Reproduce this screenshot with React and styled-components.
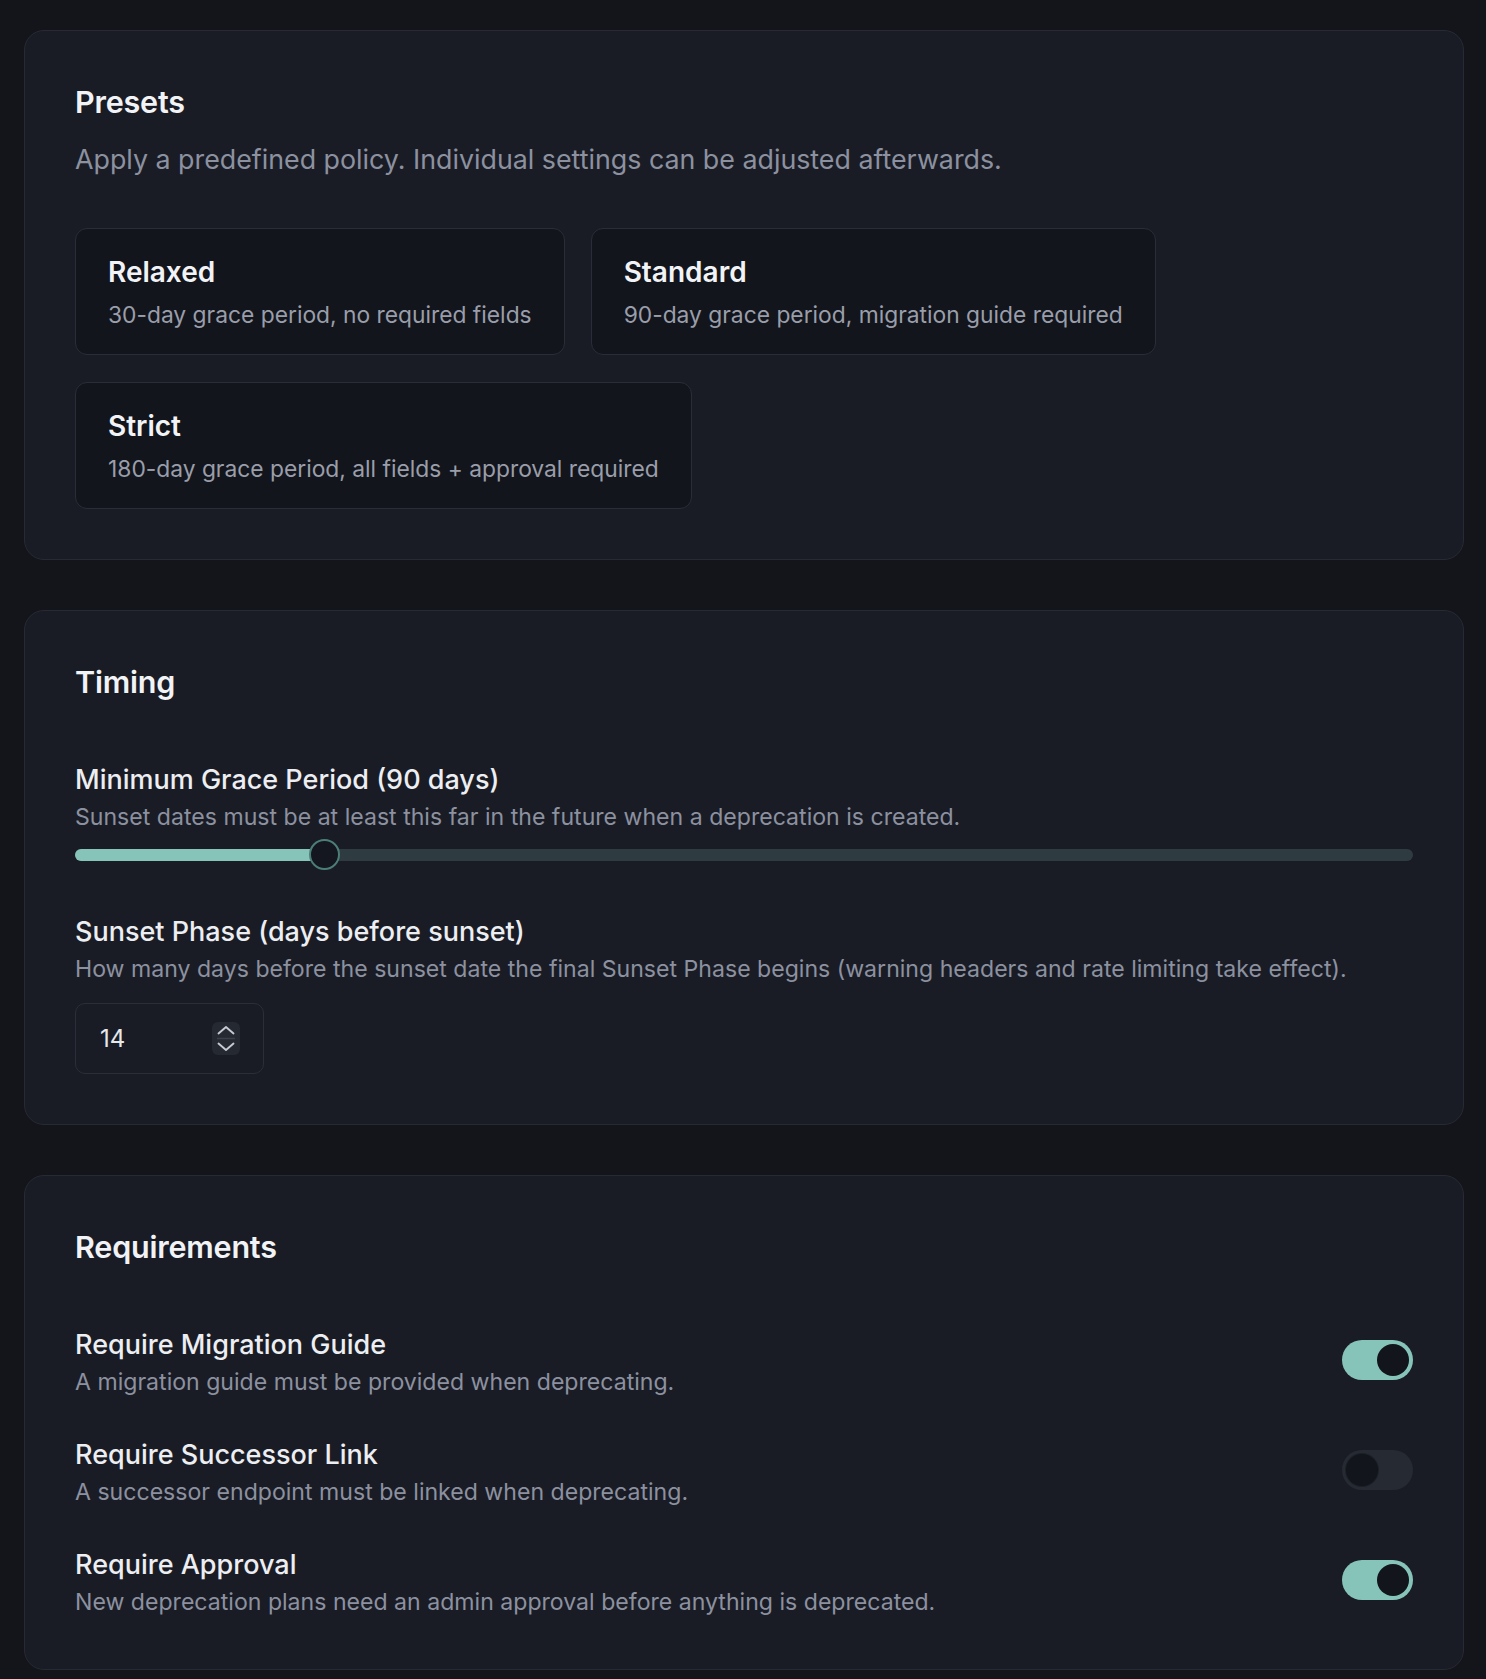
import React, { useState } from "react"
import styled, { createGlobalStyle } from "styled-components"

const GlobalStyle = createGlobalStyle`
    html, body {
        margin: 0;
        padding: 0;
        background: #13151b;
    }
    body {
        font-family: Inter, "Noto Sans", "Liberation Sans", sans-serif;
        -webkit-font-smoothing: antialiased;
    }
    * {
        box-sizing: border-box;
    }
`

const presets = [
    { name: "Relaxed", text: "30-day grace period, no required fields" },
    { name: "Standard", text: "90-day grace period, migration guide required" },
    { name: "Strict", text: "180-day grace period, all fields + approval required" },
]

const requirements = [
    {
        key: "guide",
        label: "Require Migration Guide",
        hint: "A migration guide must be provided when deprecating.",
    },
    {
        key: "successor",
        label: "Require Successor Link",
        hint: "A successor endpoint must be linked when deprecating.",
    },
    {
        key: "approval",
        label: "Require Approval",
        hint: "New deprecation plans need an admin approval before anything is deprecated.",
    },
]

const MIN_DAYS = 30
const MAX_DAYS = 365
const THUMB = 31

function Slider({ value }) {
    const pct = (value - MIN_DAYS) / (MAX_DAYS - MIN_DAYS)
    const left = `calc(${pct} * (100% - ${THUMB}px))`
    return (
        <SliderWrap>
            <Track>
                <Fill style={{ width: `calc(${pct} * (100% - ${THUMB}px) + ${THUMB / 2}px)` }} />
            </Track>
            <Thumb style={{ left }} />
        </SliderWrap>
    )
}

function Spinner() {
    return (
        <SpinBox>
            <svg width="28" height="33" viewBox="0 0 28 33" fill="none">
                <polyline
                    points="6.5,11.5 14,5 21.5,11.5"
                    stroke="#c7cad1"
                    strokeWidth="1.9"
                    strokeLinecap="round"
                    strokeLinejoin="round"
                />
                <line x1="5" y1="16.5" x2="23" y2="16.5" stroke="#3b404a" strokeWidth="1.5" />
                <polyline
                    points="6.5,21.5 14,28 21.5,21.5"
                    stroke="#c7cad1"
                    strokeWidth="1.9"
                    strokeLinecap="round"
                    strokeLinejoin="round"
                />
            </svg>
        </SpinBox>
    )
}

function App() {
    const [toggles, setToggles] = useState({ guide: true, successor: false, approval: true })
    const [phase, setPhase] = useState(14)

    return (
        <Page>
            <GlobalStyle />
            <Card>
                <SectionTitle>Presets</SectionTitle>
                <SectionDesc>
                    Apply a predefined policy. Individual settings can be adjusted afterwards.
                </SectionDesc>
                <PresetGrid>
                    {presets.map((p) => (
                        <PresetCard key={p.name} type="button">
                            <PresetName>{p.name}</PresetName>
                            <PresetText>{p.text}</PresetText>
                        </PresetCard>
                    ))}
                </PresetGrid>
            </Card>

            <Card>
                <SectionTitle>Timing</SectionTitle>
                <Fields>
                    <Field>
                        <Label>Minimum Grace Period (90 days)</Label>
                        <Hint>
                            Sunset dates must be at least this far in the future when a deprecation is
                            created.
                        </Hint>
                        <Slider value={90} />
                    </Field>
                    <Field>
                        <Label>Sunset Phase (days before sunset)</Label>
                        <Hint>
                            How many days before the sunset date the final Sunset Phase begins (warning
                            headers and rate limiting take effect).
                        </Hint>
                        <NumberBox>
                            <NumberInput
                                value={phase}
                                onChange={(e) => setPhase(e.target.value)}
                            />
                            <Spinner />
                        </NumberBox>
                    </Field>
                </Fields>
            </Card>

            <Card>
                <SectionTitle>Requirements</SectionTitle>
                <ToggleList>
                    {requirements.map((r) => (
                        <ToggleRow key={r.key}>
                            <div>
                                <Label>{r.label}</Label>
                                <Hint>{r.hint}</Hint>
                            </div>
                            <Switch
                                type="button"
                                $on={toggles[r.key]}
                                onClick={() =>
                                    setToggles({ ...toggles, [r.key]: !toggles[r.key] })
                                }
                            >
                                <Knob $on={toggles[r.key]} />
                            </Switch>
                        </ToggleRow>
                    ))}
                </ToggleList>
            </Card>
        </Page>
    )
}

export default App

const Page = styled.div`
    display: flex;
    flex-direction: column;
    gap: 50px;
    padding: 30px 22px 40px 24px;
    min-height: 100vh;
    background: #13151b;
`

const Card = styled.section`
    background: #1a1c25;
    border: 1px solid #272a34;
    border-radius: 20px;
    padding: 50px;
`

const SectionTitle = styled.h2`
    margin: 0;
    font-size: 30.5px;
    line-height: 42px;
    font-weight: 600;
    color: #f2f3f6;
    letter-spacing: -0.2px;
`

const SectionDesc = styled.p`
    margin: 17px 0 0;
    font-size: 26.8px;
    line-height: 39px;
    color: #8c91a0;
`

const PresetGrid = styled.div`
    display: flex;
    flex-wrap: wrap;
    gap: 27px 26px;
    margin-top: 49px;
`

const PresetCard = styled.button`
    display: flex;
    flex-direction: column;
    gap: 6px;
    align-items: flex-start;
    text-align: left;
    padding: 24px 32px 23px;
    background: #13151c;
    border: 1px solid #2a2d38;
    border-radius: 12px;
    font-family: inherit;
    cursor: pointer;
`

const PresetName = styled.span`
    font-size: 28px;
    line-height: 39px;
    font-weight: 600;
    color: #f2f3f6;
`

const PresetText = styled.span`
    font-size: 22.8px;
    line-height: 33px;
    color: #9a9eaa;
`

const Fields = styled.div`
    display: flex;
    flex-direction: column;
    gap: 42px;
    margin-top: 57px;
`

const Field = styled.div`
    display: flex;
    flex-direction: column;
`

const Label = styled.div`
    font-size: 27px;
    line-height: 39px;
    font-weight: 500;
    color: #eceef2;
    margin-bottom: 1px;
`

const Hint = styled.div`
    font-size: 23.1px;
    line-height: 34px;
    color: #8c91a0;
`

const SliderWrap = styled.div`
    position: relative;
    height: 31px;
    margin-top: 5px;
    display: flex;
    align-items: center;
`

const Track = styled.div`
    width: 100%;
    height: 12px;
    border-radius: 6px;
    background: #2e3c41;
    overflow: hidden;
`

const Fill = styled.div`
    height: 100%;
    background: #86c4ba;
`

const Thumb = styled.div`
    position: absolute;
    top: 0;
    width: ${THUMB}px;
    height: ${THUMB}px;
    border-radius: 50%;
    background: #141720;
    border: 2px solid #4c7e78;
`

const NumberBox = styled.div`
    display: flex;
    align-items: center;
    justify-content: space-between;
    width: 189px;
    height: 71px;
    margin-top: 17px;
    padding: 0 23px 0 24px;
    border: 1px solid #2a2e38;
    border-radius: 10px;
    background: #1a1c25;
`

const NumberInput = styled.input`
    width: 80px;
    border: none;
    outline: none;
    background: transparent;
    padding: 0;
    font-family: inherit;
    font-size: 24px;
    color: #e6e8ec;
`

const SpinBox = styled.div`
    display: flex;
    width: 28px;
    height: 33px;
    border-radius: 6px;
    background: #252932;
`

const ToggleList = styled.div`
    display: flex;
    flex-direction: column;
    gap: 36px;
    margin-top: 57px;
`

const ToggleRow = styled.div`
    display: flex;
    align-items: center;
    justify-content: space-between;
    gap: 24px;
`

const Switch = styled.button`
    flex-shrink: 0;
    display: flex;
    align-items: center;
    justify-content: ${(p) => (p.$on ? "flex-end" : "flex-start")};
    width: 71px;
    height: 40px;
    padding: 0 4px;
    margin-top: -4px;
    border: none;
    border-radius: 999px;
    background: ${(p) => (p.$on ? "#86c4ba" : "#262a33")};
    cursor: pointer;
`

const Knob = styled.span`
    width: 32px;
    height: 32px;
    border-radius: 50%;
    background: #12151b;
    box-shadow: ${(p) => (p.$on ? "none" : "0 0 0 1px #1c2027")};
`
